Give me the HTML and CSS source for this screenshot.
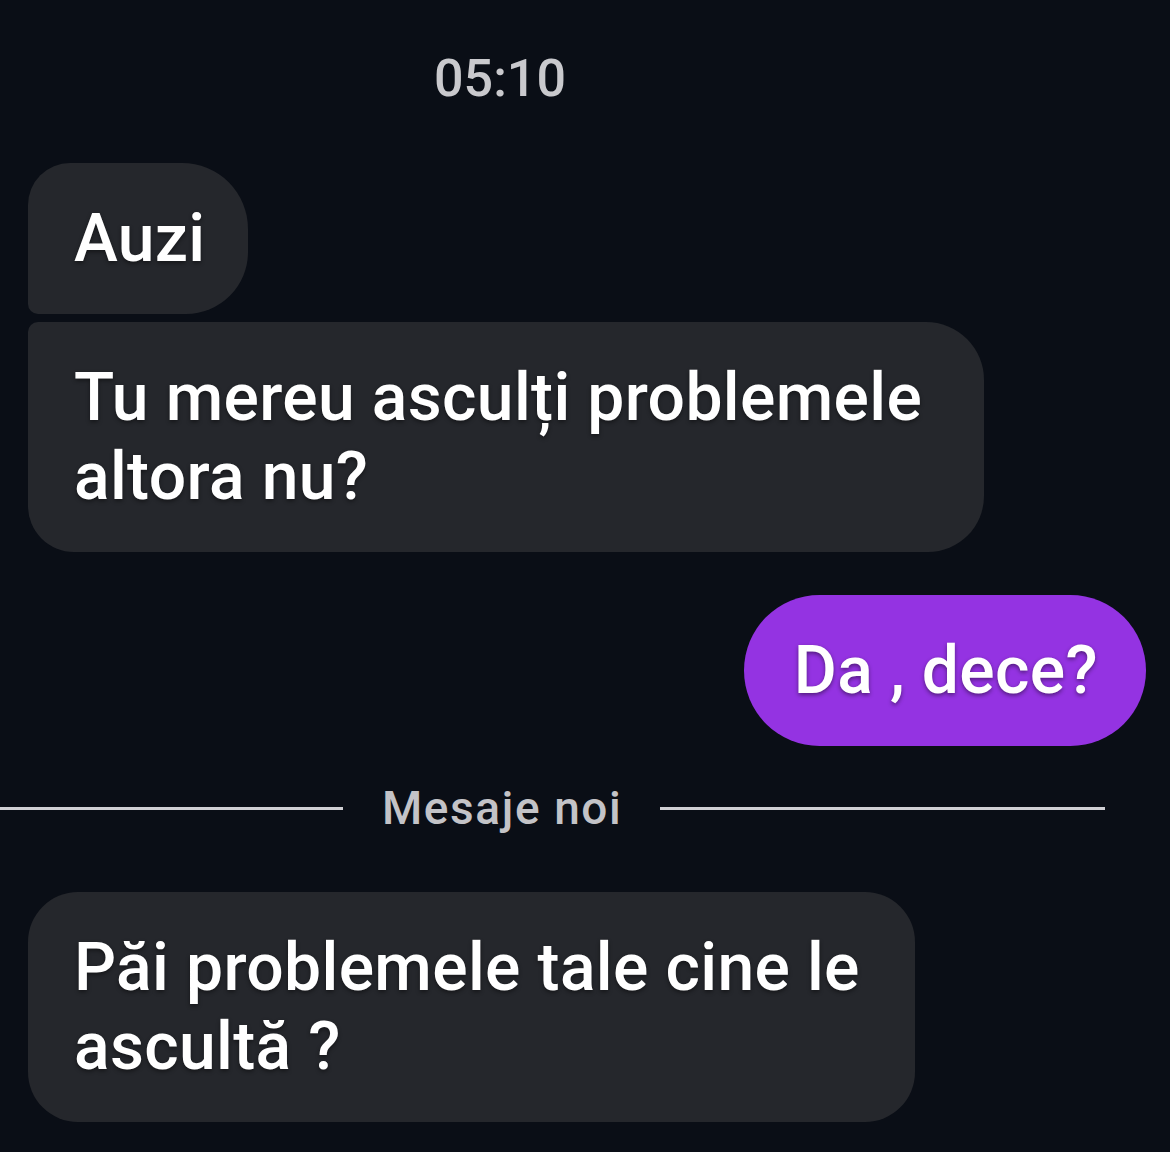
FILE: index.html
```html
<!DOCTYPE html>
<html lang="ro">
<head>
    <meta charset="UTF-8">
    <meta name="viewport" content="width=device-width, initial-scale=1.0">
    <title>Chat</title>
    <link rel="stylesheet" href="styles.css">
</head>
<body>

<div class="chat">
    <div class="time">05:10</div>

    <div class="row">
        <div class="bubble in first">Auzi</div>
    </div>
    <div class="row">
        <div class="bubble in last wide">Tu mereu asculți problemele<br>altora nu?</div>
    </div>

    <div class="row out-row">
        <div class="bubble out">Da , dece?</div>
    </div>

    <div class="divider">
        <span class="line left"></span>
        <span class="label">Mesaje noi</span>
        <span class="line right"></span>
    </div>

    <div class="row">
        <div class="bubble in single">Păi problemele tale cine le<br>ascultă ?</div>
    </div>
</div>

</body>
</html>
```

FILE: styles.css
```css
body {
    margin: 0;
    padding: 0;
    background-color: #0a0e16;
    font-family: Roboto, "Liberation Sans", Arial, sans-serif;
    color: #fff;
}

.chat {
    width: 1170px;
    height: 1152px;
    overflow: hidden;
    padding-top: 48px;
    box-sizing: border-box;
}

.time {
    width: 1000px;
    text-align: center;
    font-size: 52px;
    font-weight: 500;
    line-height: 62px;
    color: #c9c9cd;
    margin-bottom: 53px;
}

.row {
    display: flex;
    padding: 0 24px 0 28px;
    margin-bottom: 8px;
}

.out-row {
    justify-content: flex-end;
    margin-top: 43px;
}

.bubble {
    font-size: 66px;
    font-weight: 500;
    line-height: 79px;
    letter-spacing: 0.35px;
    padding: 36px 46px;
    text-shadow: 0 2px 4px rgba(0, 0, 0, 0.45);
}

.bubble.in {
    background-color: #25272c;
}

.bubble.wide {
    padding-right: 62px;
}

.bubble.first {
    border-radius: 42px 66px 62px 10px;
    padding-right: 42px;
}

.bubble.last {
    border-radius: 10px 58px 56px 46px;
}

.bubble.single {
    border-radius: 50px;
    padding-right: 55px;
}

.bubble.out {
    background-color: #9433e2;
    border-radius: 76px;
    padding: 36px 48px 36px 50px;
}

.divider {
    display: flex;
    align-items: center;
    margin: 42px 0 64px;
    height: 40px;
}

.line {
    height: 3px;
    background-color: #d0d0d4;
}

.line.left {
    width: 343px;
}

.line.right {
    width: 445px;
}

.label {
    font-size: 46px;
    font-weight: 500;
    letter-spacing: 1.6px;
    color: #c3c3c7;
    margin: 0 38px 0 39px;
}
```
